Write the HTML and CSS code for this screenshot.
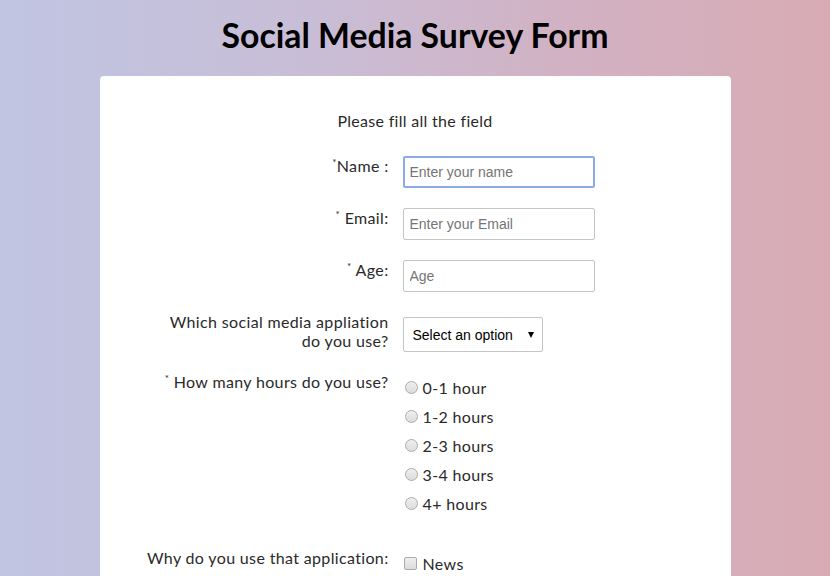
FILE: index.html
```html
<!DOCTYPE html>
<html lang="en">
<head>
<meta charset="utf-8">
<title>Social Media Survey Form</title>
<link rel="stylesheet" href="styles.css">
</head>
<body>
<h1 class="title">Social Media Survey Form</h1>
<form class="card">
  <p class="desc">Please fill all the field</p>
  <div class="row">
    <label class="label" for="name"><sup>*</sup>Name :</label>
    <div class="field"><input class="text focused" id="name" type="text" placeholder="Enter your name"></div>
  </div>
  <div class="row">
    <label class="label" for="email"><sup>*</sup> Email:</label>
    <div class="field"><input class="text" id="email" type="email" placeholder="Enter your Email"></div>
  </div>
  <div class="row">
    <label class="label" for="age"><sup>*</sup> Age:</label>
    <div class="field"><input class="text" id="age" type="number" placeholder="Age"></div>
  </div>
  <div class="row">
    <label class="label" for="app">Which social media appliation<br>do you use?</label>
    <div class="field">
      <span class="select-wrap"><select class="select" id="app"><option>Select an option</option><option>Facebook</option><option>Instagram</option><option>Twitter</option></select></span>
    </div>
  </div>
  <div class="row row-radios">
    <div class="label"><sup>*</sup> How many hours do you use?</div>
    <div class="field list">
      <label class="opt"><input class="radio" type="radio" name="hours">0-1 hour</label>
      <label class="opt"><input class="radio" type="radio" name="hours">1-2 hours</label>
      <label class="opt"><input class="radio" type="radio" name="hours">2-3 hours</label>
      <label class="opt"><input class="radio" type="radio" name="hours">3-4 hours</label>
      <label class="opt"><input class="radio" type="radio" name="hours">4+ hours</label>
    </div>
  </div>
  <div class="row">
    <div class="label">Why do you use that application:</div>
    <div class="field list">
      <label class="opt"><input class="check" type="checkbox">News</label>
      <label class="opt"><input class="check" type="checkbox">Entertainment</label>
      <label class="opt"><input class="check" type="checkbox">Connecting with friends</label>
    </div>
  </div>
</form>
</body>
</html>
```

FILE: styles.css
```css
html, body {
  margin: 0;
  padding: 0;
}
body {
  background: linear-gradient(to right, #c0c5e2 0%, #c8bed8 35%, #d2b1c2 70%, #d8abb4 100%);
  font-family: "Lato", "Open Sans", sans-serif;
  color: #2a2a2a;
  min-height: 100vh;
  padding-top: 15px;
  box-sizing: border-box;
}
.title {
  margin: 0 0 21px;
  font-size: 33.8px;
  line-height: 40px;
  font-weight: 700;
  text-align: center;
  color: #000;
}
.card {
  width: 631px;
  margin: 0 auto;
  background: #fff;
  border-radius: 4px;
  padding: 35px 0 20px;
  box-sizing: border-box;
}
.desc {
  margin: 0 0 26px;
  font-size: 16px;
  line-height: 19px;
  letter-spacing: 0.3px;
  text-align: center;
}
.row {
  display: flex;
  gap: 14px;
  margin-bottom: 20px;
}
.label {
  width: 289px;
  padding-left: 30px;
  box-sizing: border-box;
  text-align: right;
  font-size: 16px;
  line-height: 19px;
  letter-spacing: 0.35px;
}
.label sup {
  font-size: 10px;
  vertical-align: 6px;
  line-height: 0;
}
.field {
  flex: 1;
}
.text {
  display: block;
  width: 192px;
  height: 32px;
  box-sizing: border-box;
  border: 1px solid #c4c4c4;
  border-radius: 2px;
  padding: 0 6px;
  font-family: "Liberation Sans", Arial, sans-serif;
  font-size: 14px;
  color: #222;
  background: #fff;
  outline: none;
}
.text::placeholder {
  color: #757575;
}
.text.focused {
  border: 2px solid #8aaae8;
  padding: 0 5px;
}
.select-wrap {
  position: relative;
  display: inline-block;
  margin-top: 5px;
}
.select-wrap::after {
  content: "";
  position: absolute;
  right: 9px;
  top: 15px;
  border-left: 3.5px solid transparent;
  border-right: 3.5px solid transparent;
  border-top: 6px solid #000;
  pointer-events: none;
}
.select {
  display: block;
  -webkit-appearance: none;
  appearance: none;
  width: 140px;
  height: 35px;
  box-sizing: border-box;
  border: 1px solid #c4c4c4;
  border-radius: 2px;
  background: #fff;
  padding: 0 9px;
  font-family: "Liberation Sans", Arial, sans-serif;
  font-size: 14px;
  color: #000;
}
.list {
  display: flex;
  flex-direction: column;
}
.row-radios {
  margin-bottom: 31px;
}
.opt {
  display: flex;
  align-items: center;
  margin: 5px 0;
  padding-top: 1px;
  height: 19px;
  font-size: 16px;
  line-height: 19px;
  letter-spacing: 0.35px;
}
.row-radios .opt {
  margin: 5px 0 4px;
}
.radio, .check {
  -webkit-appearance: none;
  appearance: none;
  width: 13px;
  height: 13px;
  margin: 0 5px 0 2px;
  box-sizing: border-box;
  border: 1px solid #ababab;
  background: linear-gradient(#efefef, #dcdcdc);
  flex: none;
}
.radio {
  border-radius: 50%;
}
.check {
  border-radius: 2px;
  margin-left: 1px;
  margin-right: 6px;
}
```
